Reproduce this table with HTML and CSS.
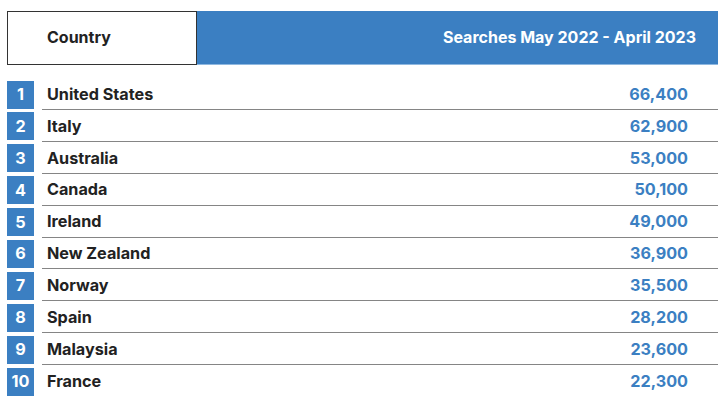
FILE: index.html
```html
<!DOCTYPE html>
<html>
<head>
<meta charset="utf-8">
<link rel="stylesheet" href="styles.css">
</head>
<body>
<div class="wrap">
  <div class="head">
    <div class="head-country">Country</div>
    <div class="head-searches">Searches May 2022 - April 2023</div>
  </div>
  <div class="rows">
    <div class="row"><div class="rank">1</div><div class="cell"><span class="name">United States</span><span class="val">66,400</span></div></div>
    <div class="row"><div class="rank">2</div><div class="cell"><span class="name">Italy</span><span class="val">62,900</span></div></div>
    <div class="row"><div class="rank">3</div><div class="cell"><span class="name">Australia</span><span class="val">53,000</span></div></div>
    <div class="row"><div class="rank">4</div><div class="cell"><span class="name">Canada</span><span class="val">50,100</span></div></div>
    <div class="row"><div class="rank">5</div><div class="cell"><span class="name">Ireland</span><span class="val">49,000</span></div></div>
    <div class="row"><div class="rank">6</div><div class="cell"><span class="name">New Zealand</span><span class="val">36,900</span></div></div>
    <div class="row"><div class="rank">7</div><div class="cell"><span class="name">Norway</span><span class="val">35,500</span></div></div>
    <div class="row"><div class="rank">8</div><div class="cell"><span class="name">Spain</span><span class="val">28,200</span></div></div>
    <div class="row"><div class="rank">9</div><div class="cell"><span class="name">Malaysia</span><span class="val">23,600</span></div></div>
    <div class="row"><div class="rank">10</div><div class="cell"><span class="name">France</span><span class="val">22,300</span></div></div>
  </div>
</div>
</body>
</html>
```
FILE: styles.css
```css
html, body {
  margin: 0;
  padding: 0;
  background: #ffffff;
}
body {
  font-family: Inter, "Liberation Sans", sans-serif;
  font-weight: 700;
  font-size: 16px;
  color: #222222;
}
.wrap {
  padding: 11px 7px 0 7px;
  width: 711px;
}
.head {
  display: flex;
  height: 54px;
}
.head-country {
  width: 190px;
  box-sizing: border-box;
  border: 1.5px solid #333333;
  border-right-width: 1px;
  display: flex;
  align-items: center;
  padding-left: 39px;
  padding-bottom: 2px;
}
.head-searches {
  flex: 1;
  background: #3b7fc2;
  color: #ffffff;
  display: flex;
  align-items: center;
  justify-content: flex-end;
  padding-right: 22px;
  padding-bottom: 2px;
  box-shadow: inset 0 -1px 0 #8fb8e0;
}
.rows {
  margin-top: 15.5px;
  display: flex;
  flex-direction: column;
  gap: 2.4px;
}
.row {
  display: grid;
  grid-template-columns: 27px 1fr;
  column-gap: 8px;
  height: 29.5px;
  font-size: 16.2px;
}
.rank {
  height: 28px;
  background: #3b7fc2;
  color: #ffffff;
  display: flex;
  align-items: center;
  justify-content: center;
  padding-bottom: 1px;
  box-sizing: border-box;
}
.cell {
  border-bottom: 1.5px solid #858585;
  display: flex;
  align-items: center;
  justify-content: space-between;
  padding: 0 30px 2px 5px;
}
.row:last-child .cell {
  border-bottom-color: transparent;
}
.val {
  color: #3b7fc2;
}
```
